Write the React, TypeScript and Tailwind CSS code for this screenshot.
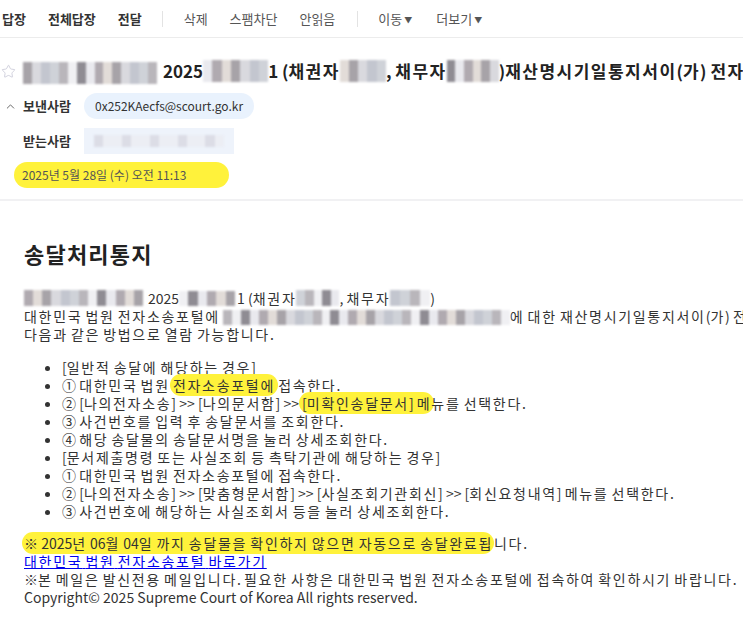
import { ChevronUp, Star } from 'lucide-react';

const shades = ['#d9d9de', '#b9b6bb', '#e9e9ee', '#a7a3a8', '#cfd2d8', '#8f8c93', '#e2dcd8', '#c3c6cf', '#f0f0f3', '#b0aab0'];

// pixelated + blurred placeholder for masked personal info
const Blur = ({ w, h = 16, seed = 1, light = false }: { w: number; h?: number; seed?: number; light?: boolean }) => {
  const n = Math.max(2, Math.round(w / 9));
  return (
    <span className="inline-flex align-middle overflow-hidden blur-[1.2px] shrink-0" style={{ width: w, height: h }}>
      {Array.from({ length: n }).map((_, i) => (
        <span
          key={i}
          className="flex-1 h-full"
          style={{ background: light ? (i % 3 === 0 ? '#dcdde6' : '#eceef4') : shades[(i * 7 + seed * 3) % shades.length] }}
        />
      ))}
    </span>
  );
};

// widen hangul runs so Noto matches the Malgun-like metrics of the screenshot
const kr = (text: string, wide = false) =>
  text.split(/([\uAC00-\uD7A3]+)/).map((part, i) =>
    /[\uAC00-\uD7A3]/.test(part) ? (
      <span key={i} className={wide ? 'tracking-[1.5px]' : 'tracking-[1.7px]'}>{part}</span>
    ) : (
      <span key={i}>{part}</span>
    )
  );

const Hl = ({ children }: { children: React.ReactNode }) => (
  <span className="bg-[#fff23b] rounded-full px-[3px] -mx-[3px] py-[1px]">{children}</span>
);

const listItems: React.ReactNode[] = [
  kr('[일반적 송달에 해당하는 경우]'),
  <>{kr('① 대한민국 법원 ')}<Hl>{kr('전자소송포털에')}</Hl>{kr(' 접속한다.')}</>,
  <>{kr('② [나의전자소송] >> [나의문서함] >> ')}<Hl>{kr('[미확인송달문서] 메')}</Hl>{kr('뉴를 선택한다.')}</>,
  kr('③ 사건번호를 입력 후 송달문서를 조회한다.'),
  kr('④ 해당 송달물의 송달문서명을 눌러 상세조회한다.'),
  kr('[문서제출명령 또는 사실조회 등 촉탁기관에 해당하는 경우]'),
  kr('① 대한민국 법원 전자소송포털에 접속한다.'),
  kr('② [나의전자소송] >> [맞춤형문서함] >> [사실조회기관회신] >> [회신요청내역] 메뉴를 선택한다.'),
  kr('③ 사건번호에 해당하는 사실조회서 등을 눌러 상세조회한다.'),
];

export default function App() {
  return (
    <div className="w-[743px] h-[619px] overflow-hidden bg-white text-[#222] font-['Noto_Sans_CJK_KR','Noto_Sans',sans-serif]">
      {/* toolbar */}
      <div className="h-[38px] border-b border-[#ececec] flex items-center text-[13px] whitespace-nowrap">
        <div className="flex items-center gap-[22px] font-bold text-[#333] pl-[2px]">
          <span>답장</span>
          <span>전체답장</span>
          <span>전달</span>
        </div>
        <div className="w-px h-[16px] bg-[#e3e3e3] ml-[20px] mr-[21px]" />
        <div className="flex items-center gap-[22px] text-[#555]">
          <span>삭제</span>
          <span>스팸차단</span>
          <span>안읽음</span>
        </div>
        <div className="w-px h-[16px] bg-[#e3e3e3] ml-[22px] mr-[20px]" />
        <div className="flex items-center gap-[24px] text-[#555]">
          <span>이동<span className="text-[8px] ml-[2px] align-middle">▼</span></span>
          <span>더보기<span className="text-[8px] ml-[2px] align-middle">▼</span></span>
        </div>
      </div>

      {/* subject */}
      <div className="mt-[20px] flex items-center whitespace-nowrap text-[17px] font-bold text-[#222] h-[26px]">
        <Star className="w-[15px] h-[15px] text-[#c3c3d3] shrink-0 ml-[1px]" strokeWidth={1.2} />
        <span className="ml-[7px]"><Blur w={134} h={22} seed={1} /></span>
        <span className="ml-[6px]">2025</span>
        <Blur w={65} h={22} seed={4} />
        <span>1 ({kr('채권자', true)} </span>
        <Blur w={46} h={22} seed={2} />
        <span>, {kr('채무자', true)} </span>
        <Blur w={52} h={22} seed={5} />
        <span>){kr('재산명시기일통지서이', true)}({kr('가', true)}) {kr('전자발송되었습니다', true)}</span>
      </div>

      {/* sender / receiver */}
      <div className="mt-[9px] flex items-center h-[26px] whitespace-nowrap">
        <ChevronUp className="w-[13px] h-[13px] text-[#666] ml-[4px]" strokeWidth={1.8} />
        <span className="ml-[6px] text-[13px] font-semibold text-[#333] w-[61px]">보낸사람</span>
        <span className="bg-[#e9f2fd] rounded-full px-[11px] h-[26px] flex items-center text-[12px] text-[#333]">0x252KAecfs@scourt.go.kr</span>
      </div>
      <div className="mt-[9px] flex items-center h-[26px] whitespace-nowrap">
        <span className="ml-[23px] text-[13px] font-semibold text-[#333] w-[61px]">받는사람</span>
        <span className="bg-[#eef3fb] h-[26px] w-[150px] flex items-center px-[10px]">
          <Blur w={130} h={12} light />
        </span>
      </div>
      <div className="mt-[8px] ml-[14px] w-[215px] h-[26px] bg-[#fff23b] rounded-full flex items-center pl-[8px] text-[12px] text-[#555] whitespace-nowrap">
        2025년 5월 28일 (수) 오전 11:13
      </div>

      <div className="mt-[11px] border-t-2 border-[#f1f1f3]" />

      {/* body */}
      <div className="pl-[24px] text-[14px] leading-[18px] text-[#333] whitespace-nowrap">
        <h1 className="mt-[37px] text-[22px] font-bold text-[#222] leading-[30px] tracking-[1.2px]">송달처리통지</h1>
        <div className="mt-[21px]">
          <div className="flex items-center h-[18px]">
            <Blur w={119} h={16} seed={3} />
            <span className="ml-[5px]">2025</span>
            <Blur w={56} h={15} seed={6} />
            <span className="ml-[2px]">1 ({kr('채권자')} </span>
            <Blur w={43} h={16} seed={8} />
            <span>, {kr('채무자')} </span>
            <Blur w={40} h={16} seed={9} />
            <span>)</span>
          </div>
          <div className="flex items-center h-[18px]">
            <span>{kr('대한민국 법원 전자소송포털에')}</span>
            <span className="ml-[3px]"><Blur w={287} h={15} seed={7} /></span>
            <span>{kr('에 대한 재산명시기일통지서이(가) 전자발송되었습니다.')}</span>
          </div>
          <div className="h-[18px]">{kr('다음과 같은 방법으로 열람 가능합니다.')}</div>
        </div>

        <ul className="mt-[15px] list-disc pl-[38px]">
          {listItems.map((item, i) => (
            <li key={i} className="h-[18px]">{item}</li>
          ))}
        </ul>

        <div className="mt-[14px] h-[18px]">
          <span className="bg-[#fff23b] rounded-full pl-[2px] pr-[1px] -ml-[2px] py-[1px]">{kr('※ 2025년 06월 04일 까지 송달물을 확인하지 않으면 자동으로 송달완료됩')}</span>{kr('니다.')}
        </div>
        <div className="h-[18px]">
          <a className="text-[#0000ee] underline" href="#">{kr('대한민국 법원 전자소송포털 바로가기')}</a>
        </div>
        <div className="h-[18px]">{kr('※본 메일은 발신전용 메일입니다. 필요한 사항은 대한민국 법원 전자소송포털에 접속하여 확인하시기 바랍니다.')}</div>
        <div className="h-[18px]">Copyright© 2025 Supreme Court of Korea All rights reserved.</div>
      </div>
    </div>
  );
}
